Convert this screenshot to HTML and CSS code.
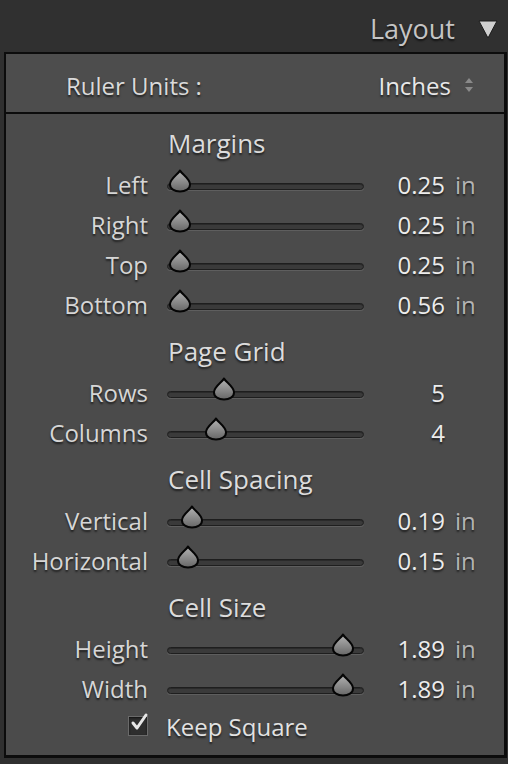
FILE: index.html
```html
<!DOCTYPE html>
<html>
<head>
  <link rel="stylesheet" href="styles.css">
</head>
<body>
  <div class="panel-header">
    <span class="panel-title">Layout</span>
    <svg class="collapse-icon" width="22" height="22" viewBox="0 0 22 22">
      <path d="M2 3 L20 3 L11 20 Z" fill="#cfcfcf" stroke="#1a1a1a" stroke-width="1" stroke-linejoin="round"/>
    </svg>
  </div>

  <div class="panel">
    <div class="ruler-row">
      <span class="ruler-label">Ruler Units :</span>
      <span class="ruler-value">Inches</span>
      <svg class="stepper" width="12" height="18" viewBox="0 0 12 18">
        <path d="M6 2 L10 7 L2 7 Z" fill="#8a8a8a"/>
        <path d="M6 16 L10 11 L2 11 Z" fill="#8a8a8a"/>
      </svg>
    </div>

    <div class="panel-body">
      <!-- Margins -->
      <div class="section">
        <div class="section-title">Margins</div>
        <div class="slider-row">
          <span class="label">Left</span>
          <div class="track"><span class="thumb" style="left: 0px"></span></div>
          <span class="value">0.25</span><span class="unit">in</span>
        </div>
        <div class="slider-row">
          <span class="label">Right</span>
          <div class="track"><span class="thumb" style="left: 0px"></span></div>
          <span class="value">0.25</span><span class="unit">in</span>
        </div>
        <div class="slider-row">
          <span class="label">Top</span>
          <div class="track"><span class="thumb" style="left: 0px"></span></div>
          <span class="value">0.25</span><span class="unit">in</span>
        </div>
        <div class="slider-row">
          <span class="label">Bottom</span>
          <div class="track"><span class="thumb" style="left: 0px"></span></div>
          <span class="value">0.56</span><span class="unit">in</span>
        </div>
      </div>

      <!-- Page Grid -->
      <div class="section">
        <div class="section-title">Page Grid</div>
        <div class="slider-row">
          <span class="label">Rows</span>
          <div class="track"><span class="thumb" style="left: 44px"></span></div>
          <span class="value">5</span><span class="unit"></span>
        </div>
        <div class="slider-row">
          <span class="label">Columns</span>
          <div class="track"><span class="thumb" style="left: 36px"></span></div>
          <span class="value">4</span><span class="unit"></span>
        </div>
      </div>

      <!-- Cell Spacing -->
      <div class="section">
        <div class="section-title">Cell Spacing</div>
        <div class="slider-row">
          <span class="label">Vertical</span>
          <div class="track"><span class="thumb" style="left: 12px"></span></div>
          <span class="value">0.19</span><span class="unit">in</span>
        </div>
        <div class="slider-row">
          <span class="label">Horizontal</span>
          <div class="track"><span class="thumb" style="left: 8px"></span></div>
          <span class="value">0.15</span><span class="unit">in</span>
        </div>
      </div>

      <!-- Cell Size -->
      <div class="section">
        <div class="section-title">Cell Size</div>
        <div class="slider-row">
          <span class="label">Height</span>
          <div class="track"><span class="thumb" style="left: 163px"></span></div>
          <span class="value">1.89</span><span class="unit">in</span>
        </div>
        <div class="slider-row">
          <span class="label">Width</span>
          <div class="track"><span class="thumb" style="left: 163px"></span></div>
          <span class="value">1.89</span><span class="unit">in</span>
        </div>
      </div>

      <div class="check-row">
        <span class="checkbox">
          <svg width="22" height="22" viewBox="0 0 22 22">
            <path d="M5 11 L9 16 L18 3" fill="none" stroke="#e6e6e6" stroke-width="3" stroke-linecap="round" stroke-linejoin="round"/>
          </svg>
        </span>
        <span class="check-label">Keep Square</span>
      </div>
    </div>
  </div>
</body>
</html>
```

FILE: styles.css
```css
* {
  margin: 0;
  padding: 0;
  box-sizing: border-box;
}

body {
  width: 508px;
  height: 764px;
  background: #303030;
  font-family: 'Open Sans', 'DejaVu Sans', sans-serif;
  color: #dadada;
  overflow: hidden;
}

/* Header */
.panel-header {
  height: 52px;
  display: flex;
  align-items: center;
  justify-content: flex-end;
  gap: 22px;
  padding-right: 9px;
  padding-top: 4px;
}

.panel-title {
  font-size: 27px;
  color: #c4c4c4;
  text-shadow: 0 2px 2px rgba(0, 0, 0, 0.6);
}

.collapse-icon {
  margin-top: 2px;
}

/* Panel box */
.panel {
  margin: 0 1px 0 4px;
  height: 706px;
  border: 2px solid #0c0c0c;
  border-right-width: 3px;
  border-bottom-width: 3px;
  background: #4b4b4b;
}

.ruler-row {
  height: 60px;
  display: flex;
  align-items: center;
  padding: 4px 0 0 60px;
  background: #4d4d4d;
  border-bottom: 2px solid #0c0c0c;
  font-size: 24px;
  text-shadow: 0 2px 2px rgba(0, 0, 0, 0.6);
}

.ruler-label {
  flex: 1;
}

.ruler-value {
  color: #e8e8e8;
  margin-right: 12px;
}

.stepper {
  margin-right: 29px;
}

.panel-body {
  padding-top: 8px;
}

.section {
  margin-bottom: 6px;
}

.section-title {
  height: 42px;
  line-height: 42px;
  padding-left: 162px;
  font-size: 26px;
  color: #dcdcdc;
  text-shadow: 0 2px 2px rgba(0, 0, 0, 0.6);
}

/* Slider rows */
.slider-row {
  height: 40px;
  display: grid;
  grid-template-columns: 142px 197px 100px 40px;
  align-items: center;
  font-size: 24px;
  text-shadow: 0 2px 2px rgba(0, 0, 0, 0.6);
}

.label {
  text-align: right;
  color: #d6d6d6;
}

.track {
  position: relative;
  margin-left: 19px;
  margin-top: 4px;
  height: 7px;
  border-radius: 4px;
  background: #3a3a3a;
  border: 1px solid #1e1e1e;
  box-shadow: 0 1px 0 #5e5e5e, inset 0 1px 0 #2a2a2a;
  width: 197px;
}

.thumb {
  position: absolute;
  top: -15px;
  width: 24px;
  height: 24px;
  background: url("data:image/svg+xml;utf8,<svg xmlns='http://www.w3.org/2000/svg' width='24' height='24' viewBox='0 0 24 24'><defs><linearGradient id='g' x1='0' y1='0' x2='0' y2='1'><stop offset='0' stop-color='%23b4b4b4'/><stop offset='1' stop-color='%23666666'/></linearGradient></defs><path d='M12 1.5 C10.5 5 2 9.5 2 15.5 C2 20 6.5 22.5 12 22.5 C17.5 22.5 22 20 22 15.5 C22 9.5 13.5 5 12 1.5 Z' fill='url(%23g)' stroke='%23050505' stroke-width='2' stroke-linejoin='round'/></svg>") no-repeat;
}

.value {
  margin-left: 19px;
  text-align: right;
  color: #ececec;
}

.unit {
  padding-left: 10px;
  color: #b4b4b4;
}

/* Checkbox row */
.check-row {
  height: 36px;
  display: flex;
  align-items: center;
  padding-left: 122px;
  gap: 18px;
  margin-top: -6px;
}

.checkbox {
  position: relative;
  width: 20px;
  height: 20px;
  background: #2e2e2e;
  border: 1px solid #6a6a6a;
  box-shadow: inset 0 1px 2px #111;
}

.checkbox svg {
  position: absolute;
  left: -1px;
  top: -5px;
}

.check-label {
  font-size: 24px;
  color: #e2e2e2;
  text-shadow: 0 2px 2px rgba(0, 0, 0, 0.6);
}
```
